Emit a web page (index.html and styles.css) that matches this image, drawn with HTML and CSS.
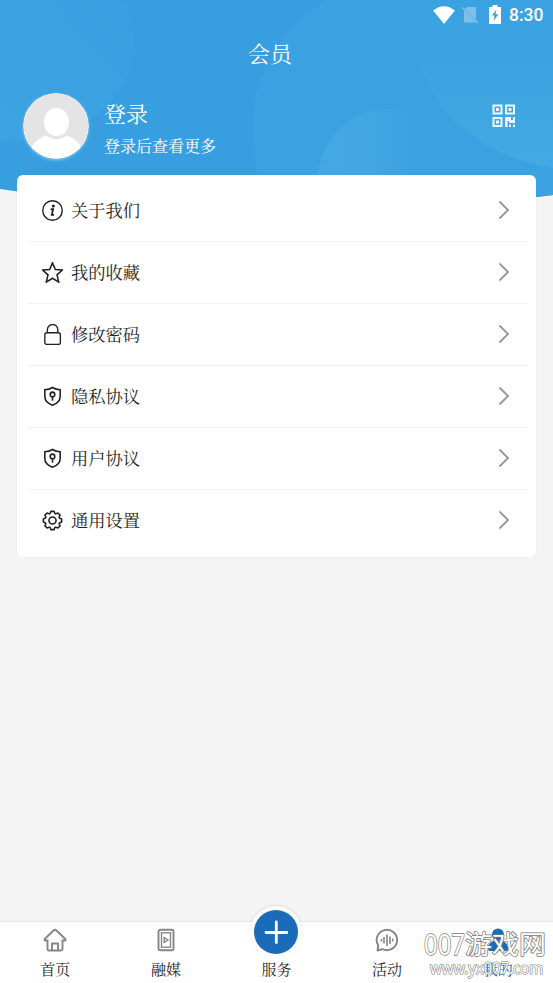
FILE: index.html
```
<!DOCTYPE html>
<html lang="zh-CN">
<head>
<meta charset="utf-8">
<title>会员</title>
<link rel="stylesheet" href="styles.css">
</head>
<body>
<svg width="0" height="0" class="defs">
  <symbol id="chevron" viewBox="0 0 12 20"><path d="M1.500 1.500 10 10 1.500 18.500" fill="none" stroke="#999" stroke-width="1.900"/></symbol>
  <symbol id="shield" viewBox="0 0 20 20"><path d="M10 1.400C7.800 2.800 5.400 3.400 2.700 3.500V10c0 4 3 6.800 7.300 8.300 4.300-1.500 7.300-4.300 7.300-8.300V3.500C14.600 3.400 12.200 2.800 10 1.400Z"/><circle cx="10" cy="8" r="2.200"/><path d="M10 10.200V14"/></symbol>
</svg>
<div class="app">
  <header class="hero">
    <svg class="hero-bg" viewBox="0 0 553 200">
      <defs>
        <linearGradient id="g1" x1="1" y1="0" x2="0" y2="1"><stop offset=".15" stop-color="#3ea3e2" stop-opacity=".35"/><stop offset="1" stop-color="#3ea3e2"/></linearGradient>
        <linearGradient id="g2"><stop offset="0" stop-color="#43a8e3"/><stop offset=".4" stop-color="#41a7e3"/><stop offset=".65" stop-color="#3ba2e1"/></linearGradient>
        <linearGradient id="g3" x1="0" y1="0" x2="0" y2="1"><stop offset="0" stop-color="#3ba2e1"/><stop offset="1" stop-color="#43a9e2"/></linearGradient>
        <clipPath id="wave"><path d="M0 0H553V195Q276 231 0 189Z"/></clipPath>
      </defs>
      <g clip-path="url(#wave)">
        <path d="M0 0H553V200H0Z" fill="#379fe0"/>
        <path d="M0 0H123Q133 20 133 42C133 92 96 140 0 140Z" fill="url(#g1)"/>
        <path d="M325 0C278 30 253 77 253 125Q253 152 262 200H553V0Z" fill="#3ba2e1"/>
        <path d="M418 38C418 105 480 157 553 168V38Z" fill="url(#g3)"/>
        <circle cx="389" cy="180" r="71" fill="url(#g2)"/>
      </g>
    </svg>
    <div class="status">
      <svg class="wifi" viewBox="0 0 22 18"><path d="M0 4.500Q11-4 22 4.500L11 18Z" fill="#fff"/></svg>
      <svg class="sim" viewBox="0 0 16 18"><path d="M5 1H14V14L3.500 3ZM2 4.500V16.500H13.500Z" fill="#fff" opacity=".34"/><path d="M.5 1.500 15.500 17" stroke="#fff" stroke-width="1.200" opacity=".4"/></svg>
      <svg class="battery" viewBox="0 0 12 19"><path d="M3.500 0H8.500V2H12V19H0V2H3.500Z" fill="#fff"/><path d="M7.500 4.500 3 10.500H5.500L4.500 16 9.300 9.200H6.500Z" fill="#379fe0"/></svg>
      <span class="time">8:30</span>
    </div>
    <h1 class="title">会员</h1>
    <div class="profile">
      <svg class="avatar" viewBox="0 0 66 66">
        <defs><clipPath id="face"><circle cx="33" cy="33" r="32.400"/></clipPath></defs>
        <circle cx="33" cy="33" r="33" fill="#f4f8fb"/>
        <g clip-path="url(#face)"><path d="M0 0H66V66H0Z" fill="#e4e4e4"/><ellipse cx="33.500" cy="29" rx="12.500" ry="14" fill="#fff"/><path d="M6 58C11 48 17 45 23 42.500Q33 50 44 42.500C50 45 56 48 60 58V66H6Z" fill="#fff"/></g>
      </svg>
      <div class="who"><div class="login">登录</div><div class="hint">登录后查看更多</div></div>
      <svg class="qr" viewBox="0 0 24 24">
        <g fill="none" stroke="#effaff" stroke-width="2"><path d="M1.500 1.500H9.500V9.500H1.500ZM14 1.500H22V9.500H14ZM1.500 14H9.500V22H1.500Z"/></g>
        <path d="M4 4H7V7H4ZM16.500 4H19.500V7H16.500ZM4 16.500H7V19.500H4ZM13 13H19V16H21V13H23V19H17V17H15.500V23H13ZM17 20.500H19V23H17ZM21 20.500H23V23H21Z" fill="#effaff"/>
      </svg>
    </div>
  </header>

  <main class="card">
    <div class="row"><svg class="ico" viewBox="0 0 20 20"><circle cx="10" cy="10" r="9.300"/><circle cx="10.800" cy="5.800" r=".8" fill="#222"/><path d="M8.300 8.800H10.600L9.300 14.200H11.500" stroke-width="1.700"/></svg><span>关于我们</span><svg class="chev"><use href="#chevron"/></svg></div>
    <div class="row"><svg class="ico bold" viewBox="0 0 20 20"><path d="m10 .8 2.700 6.300 6.700.6-5.100 4.500 1.600 6.900-5.900-3.600-5.900 3.600 1.600-6.900L.6 7.700l6.700-.6Z"/></svg><span>我的收藏</span><svg class="chev"><use href="#chevron"/></svg></div>
    <div class="row"><svg class="ico" viewBox="0 0 20 20"><rect x="2.700" y="8.300" width="14.800" height="11.200" rx="2"/><path d="M5.100 8.300V5.500a5 5 0 0 1 10 0V8.300"/></svg><span>修改密码</span><svg class="chev"><use href="#chevron"/></svg></div>
    <div class="row"><svg class="ico bold" viewBox="0 0 20 20"><use href="#shield"/></svg><span>隐私协议</span><svg class="chev"><use href="#chevron"/></svg></div>
    <div class="row"><svg class="ico bold" viewBox="0 0 20 20"><use href="#shield"/></svg><span>用户协议</span><svg class="chev"><use href="#chevron"/></svg></div>
    <div class="row"><svg class="ico bold" viewBox="0 0 20 20"><circle cx="10" cy="10" r="3.400"/><path d="M7.700 3.400 8.500 1.300H11.500L12.300 3.400 13.100 3.700 15.100 2.800 17.200 4.900 16.300 6.900 16.600 7.700 18.700 8.500V11.500L16.600 12.300 16.300 13.100 17.200 15.100 15.100 17.200 13.100 16.300 12.300 16.600 11.500 18.700H8.500L7.700 16.600 6.900 16.300 4.900 17.200 2.800 15.100 3.700 13.100 3.400 12.300 1.300 11.500V8.500L3.400 7.700 3.700 6.900 2.800 4.900 4.900 2.800 6.900 3.700Z" stroke-linejoin="round"/></svg><span>通用设置</span><svg class="chev"><use href="#chevron"/></svg></div>
  </main>

  <nav class="tabs">
    <div class="tab"><svg class="tab-ico" viewBox="0 0 24 24"><path d="M4.500 12.500H2.200Q.8 12 2 10.700L10.500 2.500Q12 1.200 13.500 2.500L22 10.700Q23.200 12 21.800 12.500H19.500V21Q19.500 22.500 18 22.500H6Q4.500 22.500 4.500 21ZM9 22V15.500H15V22"/></svg><span>首页</span></div>
    <div class="tab"><svg class="tab-ico" viewBox="0 0 24 24"><rect x="4.500" y="1.800" width="15" height="20.400" rx="1.800"/><rect x="7.500" y="4.800" width="9" height="14.400" stroke-width="1.400"/><path d="M10.200 9.500V14.500L14 12Z" stroke-width="1.400"/></svg><span>融媒</span></div>
    <div class="tab"><div class="plus"><svg viewBox="0 0 44 44"><path d="M22.300 12V32.500M12 22.500H32.800" stroke="#fff" stroke-width="2.800" stroke-linecap="round"/></svg></div><span>服务</span></div>
    <div class="tab"><svg class="tab-ico" viewBox="0 0 24 24"><path d="M2.500 22.500 3.300 17.500A10.200 10.200 0 1 1 7.500 21.200Z" stroke-linejoin="round"/><path d="M6.500 11V13.500M9 9V15.500M12 6.500V18M15 8.500V16M17.700 10.500V13.500" stroke-width="1.600"/></svg><span>活动</span></div>
    <div class="tab active"><svg class="tab-ico" viewBox="0 0 24 24"><circle cx="12" cy="6.500" r="6" fill="#1b6cb8" stroke="none"/><path d="M2 21C2 15 6 12.500 12 12.500S22 15 22 21Q22 23 20 23H4Q2 23 2 21Z" fill="#1b6cb8" stroke="none"/></svg><span>我的</span></div>
  </nav>
  <svg class="mark" viewBox="0 0 133 58">
    <text x="4" y="30" class="mark-a" textLength="41" lengthAdjust="spacingAndGlyphs">007</text>
    <text x="45" y="29" class="mark-b" textLength="81" lengthAdjust="spacingAndGlyphs">游戏网</text>
    <text x="10" y="49" class="mark-c" textLength="113" lengthAdjust="spacingAndGlyphs">www.yx007.com</text>
  </svg>
</div>
</body>
</html>
```
FILE: styles.css
```
* { box-sizing: border-box; }
body { margin: 0; background: #f4f4f4; color: #262626; font-family: "Noto Serif CJK SC", "Noto Serif SC", "Noto Sans CJK SC", sans-serif; }
.defs { position: absolute; }
.app { position: relative; height: 983px; display: flex; flex-direction: column; overflow: hidden; }
.hero { position: relative; height: 175px; flex: none; color: #fff; }
.hero-bg { position: absolute; left: 0; top: 0; width: 553px; height: 200px; }
.status { position: relative; display: flex; align-items: center; justify-content: flex-end; height: 29px; padding-right: 10px; }
.wifi { width: 22px; height: 18px; }
.sim { width: 16px; height: 18px; margin-left: 7px; }
.battery { width: 12px; height: 19px; margin-left: 11px; }
.time { font: 500 17.500px/29px Roboto, sans-serif; margin-left: 8px; width: 34px; padding-top: 2px; white-space: nowrap; }
.title { position: relative; margin: 0; padding-right: 13px; height: 48px; line-height: 47px; font-size: 22px; font-weight: 400; text-align: center; }
.profile { position: relative; display: flex; height: 98px; padding: 15px 37px 0 23px; }
.avatar { width: 66px; height: 66px; margin-top: 1px; border-radius: 50%; box-shadow: 0 1px 3px rgba(255,255,255,.4); }
.who { margin-left: 15px; padding-top: 4px; flex: 1; }
.login { font-size: 22px; line-height: 33px; }
.hint { font-size: 16px; line-height: 34px; }
.qr { width: 24px; height: 24px; margin-top: 12px; }
.card { position: relative; flex: none; width: 519px; height: 382px; margin-left: 17px; padding: 5px 8px 0 11px; background: #fff; border-radius: 6px; box-shadow: 0 0 2px rgba(0,0,0,.06); }
.row { display: flex; align-items: center; height: 62px; padding: 0 18px 0 14px; border-bottom: 1px solid #f2f2f2; font-size: 17.300px; }
.row:last-child { border-bottom: 0; padding-bottom: 1px; }
.ico { width: 21px; height: 21px; margin-right: 8px; fill: none; stroke: #222; stroke-width: 1.300; }
.bold { stroke-width: 1.500; }
.row span { flex: 1; margin-top: -2px; }
.chev { width: 12px; height: 20px; margin-top: -1px; }
.tabs { display: grid; grid-template-columns: repeat(5, 1fr); height: 62px; margin-top: auto; background: #fff; border-top: 1px solid #e6e6e6; }
.tab { display: flex; flex-direction: column; align-items: center; padding-top: 6px; font-size: 15px; line-height: 30px; }
.tab-ico { width: 24px; height: 24px; margin-bottom: 2px; fill: none; stroke: #858585; stroke-width: 1.900; }
.plus { width: 52px; height: 52px; margin: -22px 0 -4px; padding: 4px; border-radius: 50%; background: #fff; box-shadow: 0 -1px 3px rgba(0,0,0,.1); }
.plus svg { display: block; width: 44px; height: 44px; border-radius: 50%; background: #1b6cb8; }
.active { color: #1b6cb8; }
.mark { position: absolute; left: 420px; top: 925px; width: 133px; height: 58px; fill: #fff; stroke: #777; stroke-width: 1.500; stroke-linejoin: round; paint-order: stroke; }
.mark-a { font: 28.500px "Noto Sans", sans-serif; }
.mark-b { font: 400 26px "Noto Sans CJK SC", sans-serif; }
.mark-c { font: 16px "Noto Sans", sans-serif; stroke-width: 1.200; }
```
